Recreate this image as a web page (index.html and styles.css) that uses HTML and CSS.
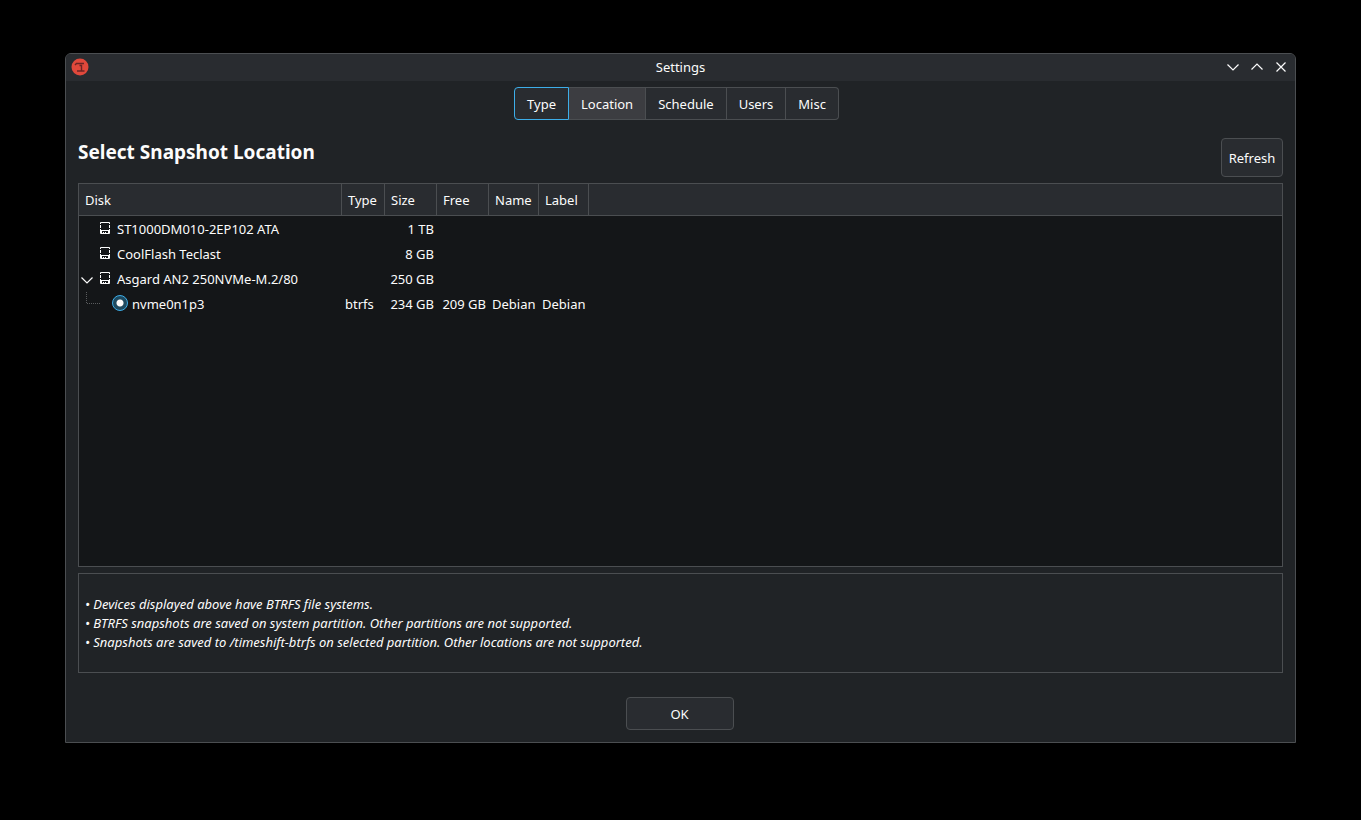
FILE: index.html
```html
<!DOCTYPE html>
<html lang="en">
<head>
<meta charset="utf-8">
<title>Settings</title>
<link rel="stylesheet" href="styles.css">
</head>
<body>
<svg class="defs" width="0" height="0" aria-hidden="true">
  <symbol id="disk" viewBox="0 0 10 12">
    <path fill="none" stroke="#fcfcfc" d="M.5 .5h9v11h-9z"/>
    <path fill="#fcfcfc" d="M0 8h10v1H0zM1 9h1v2H1zM8 9h1v2H8zM3 10h1v1H3zM5 10h1v1H5z"/>
    <path fill="#141618" d="M0 2h1v1H0zM9 2h1v1H9zM0 6h1v1H0zM9 6h1v1H9z"/>
  </symbol>
</svg>
<main class="window">
  <header class="titlebar">
    <svg class="app-icon" width="18" height="18" viewBox="0 0 18 18" aria-hidden="true">
      <circle cx="9" cy="9" r="8.500" fill="#e0483b"/>
      <path fill="none" stroke="#6b2424" stroke-width="1.4" d="M4 7 5.500 5.500H13M8.500 7.500h2v5M6 13h7.500"/>
    </svg>
    <h1 class="title">Settings</h1>
    <div class="window-controls">
      <button class="control" type="button" aria-label="Minimize"><svg width="12" height="12" viewBox="0 0 12 12"><path d="M.5 3.5 6 9l5.500-5.500"/></svg></button>
      <button class="control" type="button" aria-label="Maximize"><svg width="12" height="12" viewBox="0 0 12 12"><path d="M.5 8.500 6 3l5.500 5.500"/></svg></button>
      <button class="control" type="button" aria-label="Close"><svg width="12" height="12" viewBox="0 0 12 12"><path d="m1.500 1.500 9 9m0-9-9 9"/></svg></button>
    </div>
  </header>
  <nav class="tabs">
    <button class="tab focused" type="button">Type</button>
    <button class="tab active" type="button">Location</button>
    <button class="tab" type="button">Schedule</button>
    <button class="tab" type="button">Users</button>
    <button class="tab" type="button">Misc</button>
  </nav>
  <section class="content">
    <div class="heading-row">
      <h2 class="heading">Select Snapshot Location</h2>
      <button class="button refresh" type="button">Refresh</button>
    </div>
    <div class="devices">
      <table class="device-table">
        <colgroup>
          <col class="col-disk"><col class="col-type"><col class="col-size"><col class="col-size"><col class="col-name"><col class="col-name"><col>
        </colgroup>
        <thead>
          <tr><th>Disk</th><th>Type</th><th>Size</th><th>Free</th><th>Name</th><th>Label</th><td></td></tr>
        </thead>
        <tbody>
          <tr>
            <td><div class="disk"><span class="expander"></span><svg class="disk-icon" width="10" height="12"><use href="#disk"/></svg>ST1000DM010-2EP102 ATA</div></td>
            <td></td><td class="number">1 TB</td><td></td><td></td><td></td><td></td>
          </tr>
          <tr>
            <td><div class="disk"><span class="expander"></span><svg class="disk-icon" width="10" height="12"><use href="#disk"/></svg>CoolFlash Teclast</div></td>
            <td></td><td class="number">8 GB</td><td></td><td></td><td></td><td></td>
          </tr>
          <tr>
            <td><div class="disk"><button class="expander" type="button" aria-label="Collapse" aria-expanded="true"><svg width="12" height="12" viewBox="0 0 12 12"><path d="M.5 3.500 6 9l5.500-5.500"/></svg></button><svg class="disk-icon" width="10" height="12"><use href="#disk"/></svg>Asgard AN2 250NVMe-M.2/80</div></td>
            <td></td><td class="number">250 GB</td><td></td><td></td><td></td><td></td>
          </tr>
          <tr>
            <td><div class="disk"><svg class="branch" width="16" height="12" viewBox="0 0 16 12" aria-hidden="true"><path d="M.5 0v11.500H15"/></svg><input class="radio" type="radio" name="device" id="nvme" checked><label for="nvme">nvme0n1p3</label></div></td>
            <td>btrfs</td><td class="number">234 GB</td><td class="number">209 GB</td><td>Debian</td><td>Debian</td><td></td>
          </tr>
        </tbody>
      </table>
    </div>
    <div class="notes">
      <p>• Devices displayed above have BTRFS file systems.</p>
      <p>• BTRFS snapshots are saved on system partition. Other partitions are not supported.</p>
      <p>• Snapshots are saved to /timeshift-btrfs on selected partition. Other locations are not supported.</p>
    </div>
  </section>
  <footer class="footer">
    <button class="button ok" type="button">OK</button>
  </footer>
</main>
</body>
</html>
```

FILE: styles.css
```css
* {
  box-sizing: border-box;
}

body {
  display: flex;
  min-height: 100vh;
  margin: 0;
  padding: 53px 65px 77px;
  background: #000;
  color: #fcfcfc;
  font: 13px/19px "Noto Sans", sans-serif;
}

button {
  padding: 0;
  border: 0;
  background: none;
  color: inherit;
  font: inherit;
}

.defs {
  position: absolute;
}

.window {
  display: flex;
  flex: 1;
  flex-direction: column;
  min-width: 0;
  border: 1px solid #4b4e51;
  border-radius: 6px 6px 0 0;
  background: #202326;
}

.titlebar {
  display: grid;
  grid-template-columns: 1fr auto 1fr;
  align-items: center;
  height: 27px;
  padding: 0 8px;
  border-radius: 5px 5px 0 0;
  background: #292c30;
}

.app-icon {
  margin: 0 0 2px -3px;
}

.title {
  margin: 0;
  font-size: 13px;
  font-weight: 400;
}

.window-controls {
  display: flex;
  justify-content: flex-end;
  gap: 12px;
  padding-bottom: 2px;
}

.control {
  display: flex;
}

.control path,
.expander path {
  fill: none;
  stroke: #fcfcfc;
  stroke-width: 1.2;
}

.tabs {
  display: flex;
  justify-content: center;
  padding: 6px 8px 0 0;
}

.tab {
  height: 33px;
  padding: 2px 12px 0;
  border: solid #4b4e51;
  border-width: 1px 1px 1px 0;
  background: #292c30;
}

.tab:first-child {
  border-left-width: 1px;
  border-radius: 4px 0 0 4px;
}

.tab:last-child {
  border-radius: 0 4px 4px 0;
}

.tab.focused {
  border-color: #3daee9;
}

.tab.active {
  background: #3c3d41;
}

.content {
  display: flex;
  flex: 1;
  flex-direction: column;
  padding: 18px 12px 0;
}

.heading-row {
  display: flex;
  justify-content: space-between;
  align-items: flex-start;
  margin-bottom: 6px;
}

.heading {
  margin: 0;
  font-size: 19px;
  line-height: 28px;
}

.button {
  border: 1px solid #4b4e51;
  border-radius: 4px;
  background: #292c30;
}

.refresh {
  width: 62px;
  height: 39px;
  padding-top: 2px;
}

.devices {
  flex: 1;
  border: 1px solid #4b4e51;
  background: #141618;
}

.device-table {
  width: 100%;
  border-spacing: 0;
  table-layout: fixed;
}

.col-disk {
  width: 263px;
}

.col-type {
  width: 43px;
}

.col-size {
  width: 52px;
}

.col-name {
  width: 50px;
}

thead tr > * {
  height: 32px;
  padding: 2px 0 0 6px;
  border-bottom: 1px solid #4b4e51;
  background: #292c30;
  font-weight: 400;
  text-align: left;
}

thead th {
  border-right: 1px solid #4b4e51;
}

tbody td {
  height: 25px;
  padding: 0 3px;
  white-space: nowrap;
}

tbody tr:first-child td {
  height: 26px;
  padding-top: 1px;
}

tbody .number {
  text-align: right;
}

.disk {
  display: flex;
  align-items: center;
}

.expander {
  display: flex;
  width: 12px;
  margin: 0 3px 0 -1px;
}

.disk-icon {
  margin: 0 7px 3px 4px;
}

.branch {
  margin: 0 10px 13px 4px;
}

.branch path {
  fill: none;
  stroke: #5a5c5e;
  stroke-dasharray: 1 1;
}

.radio {
  width: 16px;
  height: 16px;
  margin: 0 4px 3px 0;
  border: 1px solid #3daee9;
  border-radius: 50%;
  appearance: none;
  background: radial-gradient(circle, #fcfcfc 3px, #1e4a60 4px);
}

.notes {
  margin-top: 6px;
  padding: 21px 6px 20px;
  border: 1px solid #4b4e51;
  font-style: italic;
}

.notes p {
  margin: 0;
}

.footer {
  display: flex;
  justify-content: center;
  padding: 24px 2px 12px 0;
}

.ok {
  width: 108px;
  height: 33px;
  padding-top: 2px;
}
```
